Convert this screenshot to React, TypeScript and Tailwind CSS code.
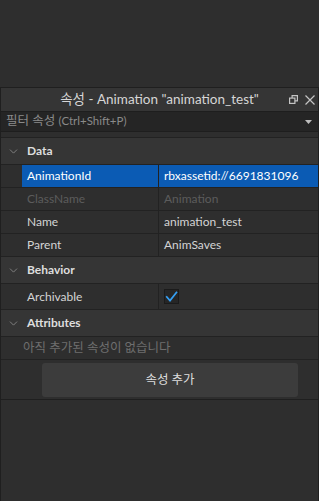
import { ChevronDown } from "lucide-react";

const FONT = { fontFamily: 'Lato, "Noto Sans CJK KR", sans-serif' };

function SectionHeader({ label }: { label: string }) {
  return (
    <div className="flex h-[27px] items-center border-b border-[#222] bg-[#353535]">
      <ChevronDown className="ml-[6px] h-[13px] w-[13px] text-[#8a8a8a]" strokeWidth={1.6} />
      <span className="ml-[7px] text-[12px] font-bold text-[#dedede]">{label}</span>
    </div>
  );
}

function PropRow({
  name,
  value,
  selected,
  disabled,
  tall,
  children,
}: {
  name: string;
  value?: string;
  selected?: boolean;
  disabled?: boolean;
  tall?: boolean;
  children?: React.ReactNode;
}) {
  const textColor = disabled ? "text-[#5c5c5c]" : selected ? "text-white" : "text-[#d4d4d4]";
  return (
    <div className={(tall ? "h-[26px]" : "h-[23px]") + " flex border-b border-[#222]"}>
      <div className="w-[21px] shrink-0 bg-[#2e2e2e]" />
      <div className={selected ? "flex flex-1 bg-[#0b5bb4]" : "flex flex-1 bg-[#2e2e2e]"}>
        <div
          className={
            "flex h-full w-[137px] shrink-0 items-center border-r border-[#222] pl-[5px] text-[12px] " +
            textColor
          }
        >
          {name}
        </div>
        <div className={"flex h-full flex-1 items-center pl-[5px] text-[12px] " + textColor}>
          {children ?? value}
        </div>
      </div>
    </div>
  );
}

export default function App() {
  return (
    <div className="flex h-[501px] w-[319px] flex-col bg-[#2e2e2e]" style={FONT}>
      <div className="h-[87px] shrink-0" />
      <div className="flex flex-1 flex-col border-x border-t border-[#1f1f1f]">
        <div className="relative flex h-[23px] items-center justify-center bg-[#353535] text-[13.5px] text-[#d6d6d6]">
          <span>속성 - Animation "animation_test"</span>
          <div className="absolute right-[3px] top-0 flex h-full items-center gap-[7px]">
            <svg width="9" height="9" viewBox="0 0 9 9" fill="none" stroke="#c4c4c4" strokeWidth="1.2">
              <rect x="0.6" y="3.1" width="5.3" height="5.3" />
              <path d="M3.1 3.1V0.6h5.3v5.3H5.9" />
            </svg>
            <svg width="10" height="10" viewBox="0 0 10 10" fill="none" stroke="#c4c4c4" strokeWidth="1.2">
              <path d="M0.5 0.5l9 9M9.5 0.5l-9 9" />
            </svg>
          </div>
        </div>
        <div className="flex h-[21px] items-center justify-between border-y border-[#1e1e1e] bg-[#252525] pl-[5px] pr-[6px]">
          <span className="text-[12.5px] text-[#8a8a8a]">
            필터 속성 <span className="text-[11.5px]">(Ctrl+Shift+P)</span>
          </span>
          <svg width="7" height="4" viewBox="0 0 7 4">
            <path d="M0 0h7L3.5 4z" fill="#bdbdbd" />
          </svg>
        </div>
        <div className="h-[6px] border-b border-[#222]" />

        <SectionHeader label="Data" />
        <PropRow name="AnimationId" value="rbxassetid://6691831096" selected />
        <PropRow name="ClassName" value="Animation" disabled />
        <PropRow name="Name" value="animation_test" />
        <PropRow name="Parent" value="AnimSaves" />

        <SectionHeader label="Behavior" />
        <PropRow name="Archivable" tall>
          <div className="flex h-[15px] w-[15px] items-center justify-center border border-[#1b1b1b] bg-[#262626]">
            <svg width="13" height="11" viewBox="0 0 13 11" fill="none">
              <path d="M1.2 5.2l3.8 4.4L12 0.8" stroke="#35a0f5" strokeWidth="1.7" />
            </svg>
          </div>
        </PropRow>

        <SectionHeader label="Attributes" />
        <div className="flex h-[23px] items-center border-b border-[#222] pl-[22px] text-[12.5px] text-[#6e6e6e]">
          아직 추가된 속성이 없습니다
        </div>
        <div className="flex h-[40px] items-start border-b border-[#1f1f1f] pl-[41px] pt-[3px]">
          <div className="flex h-[34px] w-[256px] items-center justify-center rounded-[3px] bg-[#3c3c3c] text-[12.5px] text-[#dcdcdc]">
            속성 추가
          </div>
        </div>
        <div className="flex-1" />
      </div>
    </div>
  );
}
